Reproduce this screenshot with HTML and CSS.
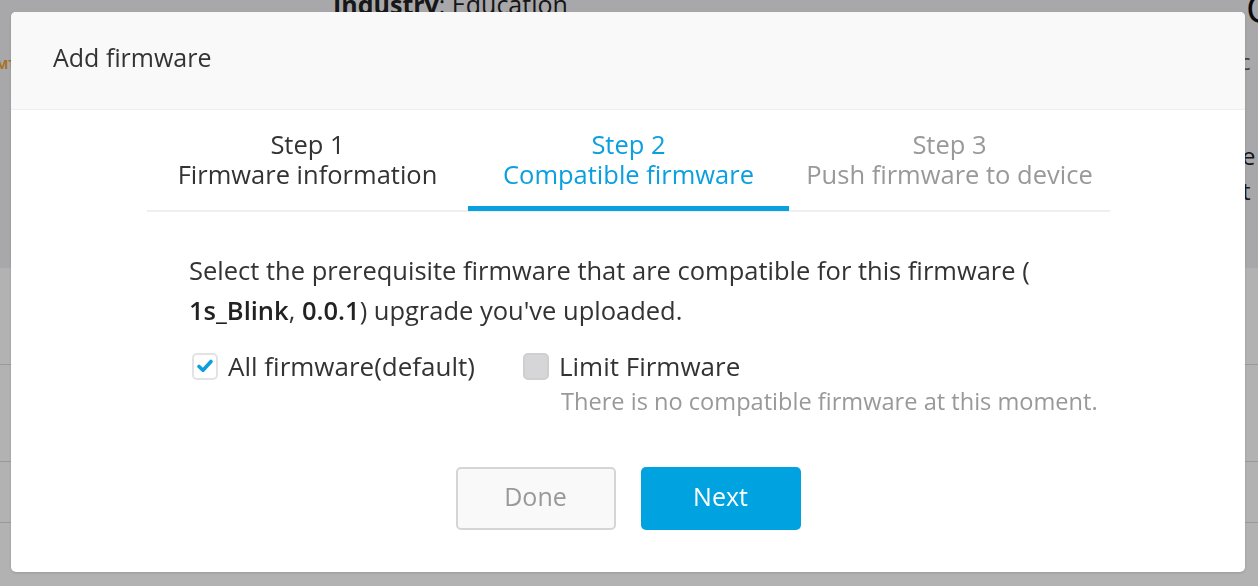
FILE: index.html
```html
<!DOCTYPE html>
<html>
<head>
<meta charset="utf-8">
<link rel="stylesheet" href="styles.css">
</head>
<body>
<div class="page">
  <div class="page-top">
    <div class="page-left"><span class="page-tag">MT</span></div>
    <div class="page-info"><b>Industry</b>: Education</div>
    <div class="page-side">
      <div class="side-big">C</div>
      <div class="side-small">: c</div>
      <div class="side-mid side-first">e</div>
      <div class="side-mid">t</div>
    </div>
  </div>
  <div class="page-rows">
    <div class="page-row"></div>
    <div class="page-row"></div>
    <div class="page-row"></div>
  </div>
</div>
<div class="overlay"></div>
<div class="modal">
  <div class="modal-header">Add firmware</div>
  <div class="modal-body">
    <div class="steps">
      <div class="step done"><div class="step-num">Step 1</div><div class="step-name">Firmware information</div></div>
      <div class="step active"><div class="step-num">Step 2</div><div class="step-name">Compatible firmware</div></div>
      <div class="step todo"><div class="step-num">Step 3</div><div class="step-name">Push firmware to device</div></div>
    </div>
    <div class="content">
      <p class="desc">Select the prerequisite firmware that are compatible for this firmware ( <b class="fw">1s_Blink</b>, <b class="fw">0.0.1</b>) upgrade you've uploaded.</p>
      <div class="options">
        <label class="opt">
          <span class="cb checked"><svg width="20" height="20" viewBox="0 0 20 20"><path d="M4 10.5 L8 14.2 L16 5.5" fill="none" stroke="#0a9fdf" stroke-width="3.6" stroke-linecap="round" stroke-linejoin="round"/></svg></span>
          <span class="opt-label">All firmware(default)</span>
        </label>
        <div class="opt-group">
          <label class="opt">
            <span class="cb disabled"></span>
            <span class="opt-label">Limit Firmware</span>
          </label>
          <div class="hint">There is no compatible firmware at this moment.</div>
        </div>
      </div>
    </div>
    <div class="actions">
      <button class="btn btn-done">Done</button>
      <button class="btn btn-next">Next</button>
    </div>
  </div>
</div>
</body>
</html>
```
FILE: styles.css
```css
* { box-sizing: border-box; }
html, body { margin: 0; padding: 0; }
body {
  width: 1258px;
  height: 586px;
  overflow: hidden;
  font-family: "Open Sans", "Noto Sans", sans-serif;
  background: #ffffff;
  color: #333;
}
.page { width: 100%; height: 100%; }
.page-top {
  height: 268px;
  background: #f1f1f5;
  display: flex;
  align-items: flex-start;
}
.page-left { width: 333px; padding-top: 52px; }
.page-tag {
  font-size: 13px;
  font-weight: 700;
  color: #f0a030;
  margin-left: -4px;
}
.page-info {
  margin-top: -13px;
  font-size: 25px;
  color: #222;
}
.page-side {
  margin-left: auto;
  width: 14px;
  display: flex;
  flex-direction: column;
  align-items: flex-start;
  overflow: hidden;
}
.side-big { font-size: 40px; line-height: 40px; margin-top: -12px; color: #111; margin-left: 2px; }
.side-small { font-size: 22px; line-height: 30px; margin-top: -12px; color: #555; margin-left: -4px; }
.side-mid { font-size: 24px; line-height: 35px; color: #222; margin-left: -2px; }
.side-first { margin-top: 62px; }
.page-rows { display: flex; flex-direction: column; padding-top: 96px; }
.page-row { height: 1px; background: #dcdcdc; }
.page-row + .page-row { margin-top: 96px; }
.page-row:last-child { margin-top: 60px; }
.overlay {
  position: fixed;
  inset: 0;
  background: rgba(0,0,0,0.3);
}
.modal {
  position: fixed;
  left: 11px;
  top: 12px;
  width: 1234px;
  height: 560px;
  background: #fff;
  border-radius: 5px;
  overflow: hidden;
  box-shadow: 0 1px 3px rgba(0,0,0,0.15);
}
.modal-header {
  height: 98px;
  background: #f9f9f9;
  border-bottom: 1px solid #eceef2;
  display: flex;
  align-items: center;
  padding: 0 42px 8px;
  font-size: 25px;
  color: #333;
}
.modal-body { padding: 19px 135px 0 136px; }
.steps {
  display: flex;
  border-bottom: 2px solid #eeeef3;
}
.step {
  flex: 1;
  text-align: center;
  font-size: 25.5px;
  line-height: 30px;
  padding-bottom: 21px;
  position: relative;
}
.step.done { color: #333; }
.step.active { color: #0a9fdf; }
.step.active::after {
  content: "";
  position: absolute;
  left: 0; right: 0;
  bottom: -1px;
  height: 5px;
  background: #0a9fdf;
}
.step.todo { color: #999; }
.content { padding: 0 42px; }
.desc {
  margin: 38px 0 0;
  font-size: 25.5px;
  line-height: 40px;
  color: #333;
}
.fw { font-weight: 600; color: #222; }
.options {
  display: flex;
  align-items: flex-start;
  gap: 48px;
  margin-top: 21px;
  white-space: nowrap;
}
.opt {
  display: flex;
  align-items: center;
  gap: 10px;
  height: 30px;
  font-size: 26px;
  color: #333;
  flex-shrink: 0;
}
.opt-group { flex-shrink: 0; }
.cb {
  width: 26px;
  height: 27px;
  border-radius: 5px;
  border: 2px solid #e3e3e3;
  background: #fff;
  display: flex;
  align-items: center;
  justify-content: center;
  margin-left: 3px;
  flex-shrink: 0;
}
.cb.disabled { background: #d6d6d8; border-color: #cfcfd2; margin-left: 0; }
.hint {
  margin-top: 5px;
  padding-left: 38px;
  font-size: 23.6px;
  line-height: 30px;
  color: #999;
}
.actions {
  display: flex;
  justify-content: center;
  gap: 25px;
  margin: 51px 0 0 -1px;
}
.btn {
  width: 160px;
  height: 63px;
  border-radius: 5px;
  font-family: inherit;
  font-size: 25px;
  padding: 0 0 5px;
}
.btn-done {
  background: #f9f9f9;
  border: 2px solid #d5d5d5;
  color: #999;
}
.btn-next {
  background: #00a2e0;
  border: none;
  color: #fff;
}
```
